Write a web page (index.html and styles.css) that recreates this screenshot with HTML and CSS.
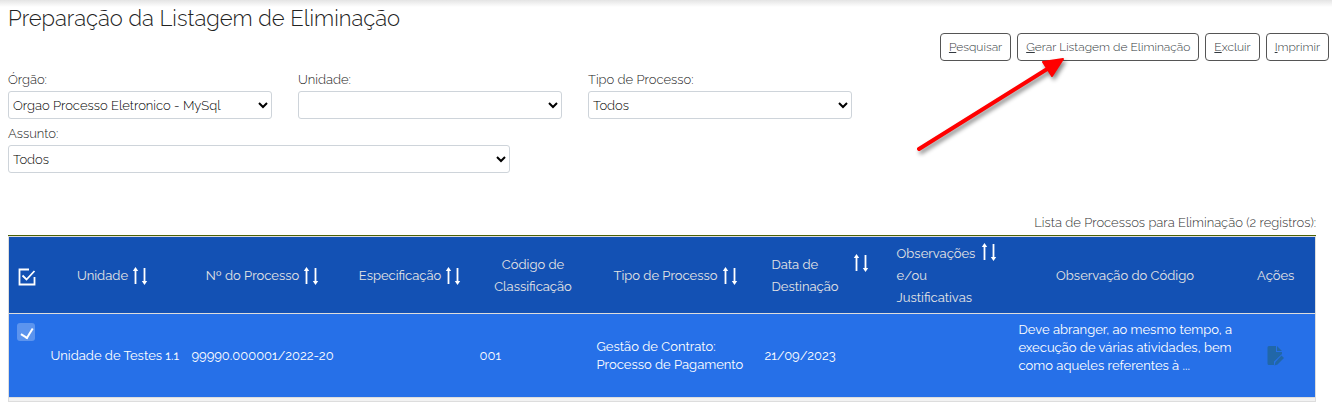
FILE: index.html
```
<!DOCTYPE html>
<html lang="pt-BR">
<head>
<meta charset="utf-8">
<title>Preparação da Listagem de Eliminação</title>
<link rel="stylesheet" href="styles.css">
</head>
<body>
<svg class="symbols" aria-hidden="true">
  <symbol id="sort" viewBox="0 0 16 18">
    <path d="M3.5 17V3M12.500 1V15" stroke="#fff" stroke-width="1.8" fill="none"/>
    <path d="M3.500 0L6.2 4H.8zM12.500 18L9.800 14H15.200z" fill="#fff"/>
  </symbol>
</svg>
<main class="page">
  <h1 class="title">Preparação da Listagem de Eliminação</h1>
  <div class="actions">
    <button class="btn" type="button"><u>P</u>esquisar</button>
    <button class="btn" type="button"><u>G</u>erar Listagem de Eliminação</button>
    <button class="btn" type="button"><u>E</u>xcluir</button>
    <button class="btn" type="button"><u>I</u>mprimir</button>
  </div>
  <form class="filters">
    <div class="field"><label for="orgao">Órgão:</label><select id="orgao"><option>Orgao Processo Eletronico - MySql</option></select></div>
    <div class="field"><label for="unidade">Unidade:</label><select id="unidade"><option></option></select></div>
    <div class="field"><label for="tipo">Tipo de Processo:</label><select id="tipo"><option>Todos</option></select></div>
    <div class="field field-wide"><label for="assunto">Assunto:</label><select id="assunto"><option>Todos</option></select></div>
  </form>
  <table class="grid">
    <caption>Lista de Processos para Eliminação (2 registros):</caption>
    <colgroup>
      <col class="c-check"><col class="c-unit"><col class="c-number"><col class="c-spec"><col class="c-code"><col class="c-type"><col class="c-date"><col class="c-notes"><col class="c-codenote"><col class="c-actions">
    </colgroup>
    <thead>
      <tr>
        <th><button class="icon-btn" type="button" aria-label="Selecionar todos"><svg width="18" height="18" viewBox="0 0 18 18" fill="none" stroke="#fff" stroke-width="1.800"><path d="M11 1.500H1.500V16.500H16.500V9"/><path d="M4.500 7.500L8.500 11.500L16.500 3"/></svg></button></th>
        <th><div class="head">Unidade<svg class="sort"><use href="#sort"/></svg></div></th>
        <th><div class="head">Nº do Processo<svg class="sort"><use href="#sort"/></svg></div></th>
        <th><div class="head">Especificação<svg class="sort"><use href="#sort"/></svg></div></th>
        <th>Código de Classificação</th>
        <th><div class="head">Tipo de Processo<svg class="sort"><use href="#sort"/></svg></div></th>
        <th><div class="head head-multi head-date"><span>Data de<br>Destinação</span><svg class="sort"><use href="#sort"/></svg></div></th>
        <th><div class="head head-multi"><span>Observações<br>e/ou<br>Justificativas</span><svg class="sort"><use href="#sort"/></svg></div></th>
        <th>Observação do Código</th>
        <th>Ações</th>
      </tr>
    </thead>
    <tbody>
      <tr class="selected">
        <td class="check"><input type="checkbox" checked aria-label="Selecionar processo 99990.000001/2022-20"></td>
        <td class="center">Unidade de Testes 1.1</td>
        <td class="center">99990.000001/2022-20</td>
        <td></td>
        <td>001</td>
        <td>Gestão de Contrato:<br>Processo de Pagamento</td>
        <td>21/09/2023</td>
        <td></td>
        <td class="note">Deve abranger, ao mesmo tempo, a<br>execução de várias atividades, bem<br>como aqueles referentes à ...</td>
        <td class="center"><button class="icon-btn" type="button" aria-label="Editar observações"><svg width="18" height="20" viewBox="0 0 18 20" fill="#2167a8"><path d="M2 0H9V6H15V8L7 15.500V19H2Q.5 19 .5 17.500V1.500Q.5 0 2 0zM10 0L15 5H10z"/><path d="M14.500 9.500L17 12L10.500 18.500L7.500 19.500L8.500 16z"/></svg></button></td>
      </tr>
      <tr class="next"><td colspan="10"></td></tr>
    </tbody>
  </table>
</main>
<svg class="pointer" width="156" height="104" viewBox="0 0 156 104" aria-hidden="true">
  <path d="M5 97L138 14" stroke="#f00" stroke-width="4" stroke-linecap="round"/>
  <path d="M149 7L129 10L138 24z" fill="#f00" stroke="#f00" stroke-width="2" stroke-linejoin="round"/>
</svg>
</body>
</html>
```
FILE: styles.css
```
* { box-sizing: border-box; }
body {
  margin: 0;
  font-family: Raleway, Lato, sans-serif;
  font-size: 13px;
  line-height: 18px;
  color: #333;
  background: linear-gradient(#e4e4e4, #fff 7px) no-repeat #fff;
}
.symbols { display: none; }
.page { padding: 4px 3px 0 8px; }
.title { margin: 0; font-size: 22px; line-height: 29px; font-weight: 300; color: #222; }
.actions { display: flex; justify-content: flex-end; gap: 6px; }
.btn {
  height: 28px;
  padding: 0 8px;
  border: 1px solid #555;
  border-radius: 4px;
  background: #fff;
  color: #343a40;
  font: 300 12px/18px Raleway, Lato, sans-serif;
}
.filters {
  display: grid;
  grid-template-columns: repeat(3, 264px);
  column-gap: 26px;
  padding-top: 8px;
}
.field { display: flex; flex-direction: column; height: 54px; font-weight: 300; color: #222; }
.field label { line-height: 22px; }
.field-wide { grid-column: span 2; width: 502px; }
select {
  width: 100%;
  height: 28px;
  flex: none;
  border: 1px solid #ced4da;
  border-radius: 3px;
  background: #fff;
  color: #000;
  font: 300 13px/18px Raleway, Lato, sans-serif;
}
.grid {
  width: calc(100% - 14px);
  margin-top: 34px;
  border-collapse: collapse;
  table-layout: fixed;
  border: 1px solid #ddd;
}
caption {
  border-bottom: 1px solid #4b6105;
  line-height: 24px;
  text-align: right;
  font-weight: 300;
  color: #333;
}
.c-check { width: 37px; }
.c-unit { width: 134px; }
.c-number { width: 166px; }
.c-spec { width: 129px; }
.c-code { width: 117px; }
.c-type { width: 168px; }
.c-date { width: 121px; }
.c-notes { width: 133px; }
.c-codenote { width: 223px; }
.c-actions { width: 79px; }
th {
  height: 77px;
  padding: 6px 5px 4px;
  background: #1351b4;
  border-bottom: 1px solid #ddd;
  color: #e4e4e4;
  font-weight: 400;
  line-height: 22px;
}
.head { display: flex; align-items: center; justify-content: center; gap: 4px; white-space: nowrap; }
.head-multi { align-items: flex-start; text-align: left; gap: 6px; }
.head-date { gap: 14px; }
.sort { width: 16px; height: 18px; flex: none; }
td { padding: 5px; white-space: nowrap; }
.selected td { height: 84px; background: #2670e8; color: #fff; }
.center { text-align: center; }
.selected .check { vertical-align: top; padding: 9px 8px; }
.selected .note { padding-bottom: 20px; }
.icon-btn { padding: 0; border: 0; background: none; display: inline-flex; vertical-align: middle; }
input[type="checkbox"] {
  appearance: none;
  display: block;
  width: 18px;
  height: 18px;
  margin: 0;
  border-radius: 3px;
  background: #5c94ee;
  overflow: hidden;
}
input[type="checkbox"]::after {
  content: "";
  display: block;
  width: 6px;
  height: 10px;
  margin: 3px 0 0 6px;
  border: solid #fff;
  border-width: 0 2px 2px 0;
  transform: rotate(32deg);
}
.next td { height: 4px; padding: 0; border-top: 1px solid #ddd; background: #f2f2f2; }
.pointer { position: absolute; left: 914px; top: 52px; filter: drop-shadow(2px 3px 2px #0007); pointer-events: none; }
```
